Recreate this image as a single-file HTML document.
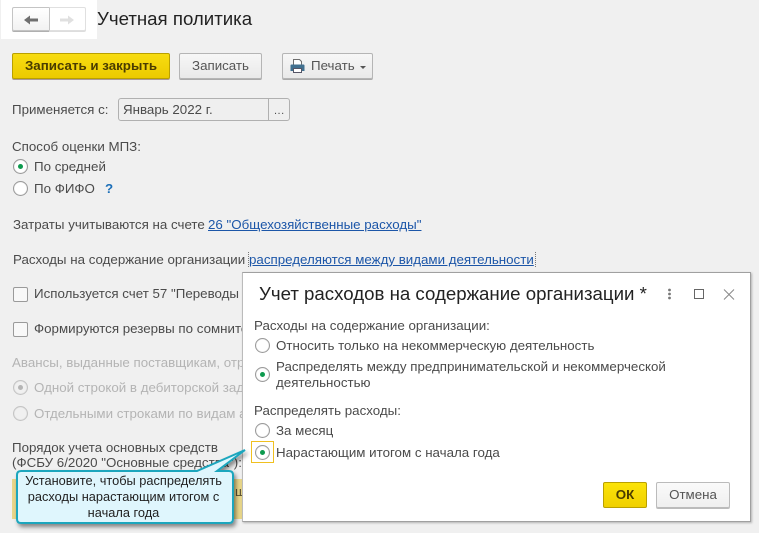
<!DOCTYPE html>
<html><head><meta charset="utf-8">
<style>
html,body{margin:0;padding:0}
body{width:759px;height:533px;overflow:hidden;background:#f0f0f0;position:relative;font-family:"Liberation Sans",sans-serif;font-size:13.33px;color:#4b4b4b}
.t{position:absolute;white-space:nowrap;line-height:14px}
.b{position:absolute;box-sizing:border-box;text-align:center}
.r{position:absolute;width:15px;height:15px;box-sizing:border-box;border:1px solid #9a9a9a;border-radius:50%;background:#fff;box-shadow:inset 0 0 1px #bbb}
.r.on:after{content:"";position:absolute;left:4px;top:4px;width:5px;height:5px;border-radius:50%;background:#0d9a4e}
.r.d{background:#f0f0f0;border-color:#c4c4c4}
.r.d.on:after{background:#b5b5b5}
.c{position:absolute;width:15px;height:15px;box-sizing:border-box;border:1px solid #9a9a9a;border-radius:2px;background:#f8f8f8}
.g{color:#b4b4b4}
a{color:#1c56a8;text-decoration:underline}
</style></head><body>
<div style="position:absolute;left:1px;top:0;width:96px;height:39px;background:#fff"></div>
<div class="b" style="left:12px;top:7px;width:38px;height:24px;background:linear-gradient(#fff,#f2f2f2);border:1px solid #c4c4c4;border-radius:2px 0 0 2px;box-shadow:0 1px 0 #b0b0b0"></div>
<div class="b" style="left:49px;top:7px;width:37px;height:24px;background:#fff;border:1px solid #e0e0e0;border-left:1px solid #c4c4c4;border-radius:0 2px 2px 0;box-shadow:0 1px 0 #ddd"></div>
<svg style="position:absolute;left:24px;top:14px" width="14" height="12"><path d="M0 6L6 1.5V4.5H14V7.5H6V10.500Z" fill="#6f6f6f"/></svg>
<svg style="position:absolute;left:60px;top:14px" width="14" height="12"><path d="M14 6L8 1.500V4.500H0V7.500H8V10.500Z" fill="#e0e0e0"/></svg>
<div class="t" style="left:97px;top:9px;font-size:18.67px;line-height:20px;color:#222">Учетная политика</div>

<div class="b" style="left:12px;top:53px;width:158px;height:26px;background:linear-gradient(#f7dc11,#ecca00);border:1px solid #b9a000;border-radius:2px;box-shadow:0 1px 0 #a99">
<span style="line-height:23px;font-weight:bold;color:#4a3c00">Записать и закрыть</span></div>
<div class="b" style="left:179px;top:53px;width:83px;height:26px;background:linear-gradient(#f7f7f7,#e9e9e9);border:1px solid #b5b5b5;border-radius:2px;box-shadow:0 1px 0 #aaa;line-height:23px;color:#555">Записать</div>
<div class="b" style="left:282px;top:53px;width:91px;height:26px;background:linear-gradient(#f7f7f7,#e9e9e9);border:1px solid #b5b5b5;border-radius:2px;box-shadow:0 1px 0 #aaa"></div>
<svg style="position:absolute;left:290px;top:59px" width="15" height="15"><path d="M3.5 5.5V.5H9.5L11.5 2.5V5.5" fill="#fff" stroke="#6d6d6d"/><path d="M1.500 5.500H13.500Q14.500 5.500 14.500 6.500V12H0.500V6.500Q.5 5.500 1.500 5.500Z" fill="#41708f"/><rect x="3.500" y="9.500" width="8" height="4" fill="#fff" stroke="#556"/></svg>
<div class="t" style="left:311px;top:59px;color:#555">Печать</div>
<div style="position:absolute;left:360px;top:66px;border:3px solid transparent;border-top:3px solid #555;border-bottom:0"></div>

<div class="t" style="left:12px;top:103px">Применяется с:</div>
<div class="b" style="left:118px;top:98px;width:172px;height:23px;border:1px solid #b0b0b0;border-radius:3px;background:#efefef"></div>
<div style="position:absolute;left:268px;top:99px;width:1px;height:21px;background:#b0b0b0"></div>
<div class="t" style="left:123px;top:103px">Январь 2022 г.</div>
<div class="t" style="left:274px;top:104px;font-size:11px;letter-spacing:.5px">...</div>

<div class="t" style="left:12px;top:140px">Способ оценки МПЗ:</div>
<div class="r on" style="left:13px;top:159px"></div>
<div class="t" style="left:34px;top:160px">По средней</div>
<div class="r" style="left:13px;top:181px"></div>
<div class="t" style="left:34px;top:182px">По ФИФО</div>
<div class="t" style="left:105px;top:182px;color:#1c6fb8;font-weight:bold">?</div>
<div class="t" style="left:13px;top:218px">Затраты учитываются на счете</div>
<div class="t" style="left:208px;top:218px"><a>26 "Общехозяйственные расходы"</a></div>
<div class="t" style="left:13px;top:253px">Расходы на содержание организации</div>
<div class="t" style="left:249px;top:253px"><a>распределяются между видами деятельности</a></div>
<div style="position:absolute;left:248px;top:252px;width:286px;height:15px;border-left:1px dotted #777;border-right:1px dotted #777"></div>

<div class="c" style="left:13px;top:287px"></div>
<div class="t" style="left:34px;top:287px">Используется счет 57 "Переводы в пути"</div>
<div class="c" style="left:13px;top:322px"></div>
<div class="t" style="left:34px;top:322px">Формируются резервы по сомнительным долгам</div>
<div class="t g" style="left:12px;top:356px">Авансы, выданные поставщикам, отражаются</div>
<div class="r d on" style="left:13px;top:380px"></div>
<div class="t g" style="left:34px;top:381px">Одной строкой в дебиторской задолженности</div>
<div class="r d" style="left:13px;top:406px"></div>
<div class="t g" style="left:34px;top:407px">Отдельными строками по видам активов</div>
<div class="t" style="left:12px;top:441px">Порядок учета основных средств</div>
<div class="t" style="left:12px;top:456px">(ФСБУ 6/2020 "Основные средства"):</div>
<div style="position:absolute;left:12px;top:479px;width:230px;height:40px;background:#e8d68a"></div>
<div class="t" style="left:235px;top:485px;color:#5a5030">ш</div>

<div style="position:absolute;left:242px;top:272px;width:507px;height:248px;background:#fff;border:1px solid #a0a0a0;border-left:1px solid #bbb;box-shadow:1px 1px 2px rgba(0,0,0,.25)"></div>
<div class="t" style="left:259px;top:283px;font-size:18.67px;line-height:21px;color:#222">Учет расходов на содержание организации *</div>
<svg style="position:absolute;left:666px;top:288px" width="8" height="12"><circle cx="3.500" cy="2" r="1.400" fill="#777"/><circle cx="3.500" cy="6" r="1.400" fill="#777"/><circle cx="3.500" cy="10" r="1.400" fill="#777"/></svg>
<div style="position:absolute;left:694px;top:289px;width:8px;height:8px;border:1px solid #666"></div>
<svg style="position:absolute;left:723px;top:289px" width="12" height="11"><path d="M1 .5L11 10.500M11 .5L1 10.500" stroke="#888" fill="none"/></svg>
<div class="t" style="left:254px;top:319px">Расходы на содержание организации:</div>
<div class="r" style="left:255px;top:338px"></div>
<div class="t" style="left:276px;top:339px">Относить только на некоммерческую деятельность</div>
<div class="r on" style="left:255px;top:367px"></div>
<div class="t" style="left:276px;top:360px">Распределять между предпринимательской и некоммерческой</div>
<div class="t" style="left:276px;top:376px">деятельностью</div>
<div class="t" style="left:254px;top:404px">Распределять расходы:</div>
<div class="r" style="left:255px;top:423px"></div>
<div class="t" style="left:276px;top:424px">За месяц</div>
<div style="position:absolute;left:251px;top:441px;width:23px;height:22px;box-sizing:border-box;border:1px solid #f0c020"></div>
<div class="r on" style="left:255px;top:445px"></div>
<div class="t" style="left:276px;top:446px">Нарастающим итогом с начала года</div>
<div class="b" style="left:603px;top:482px;width:44px;height:26px;background:linear-gradient(#fbe308,#f0d000);border:1px solid #b9a000;border-radius:2px;line-height:24px;font-weight:bold;color:#4a3c00">ОК</div>
<div class="b" style="left:656px;top:482px;width:74px;height:26px;background:linear-gradient(#fafafa,#efefef);border:1px solid #bbb;border-radius:2px;box-shadow:0 1px 0 #bbb;line-height:24px;color:#555">Отмена</div>

<svg style="position:absolute;left:10px;top:440px" width="245" height="93">
<defs><filter id="s" x="-10%" y="-10%" width="125%" height="130%"><feDropShadow dx="2" dy="3" stdDeviation="2" flood-color="#000" flood-opacity=".45"/></filter></defs>
<path d="M11 31H187L235 10L207 31H219Q223 31 223 35V79Q223 83 219 83H11Q7 83 7 79V35Q7 31 11 31Z" fill="#dff6fd" stroke="#1da6bd" stroke-width="2" filter="url(#s)"/>
</svg>
<div class="t" style="left:13px;width:221px;text-align:center;top:474px;color:#222;font-size:12.8px">Установите, чтобы распределять</div>
<div class="t" style="left:13px;width:221px;text-align:center;top:490px;color:#222;font-size:12.8px">расходы нарастающим итогом с</div>
<div class="t" style="left:13px;width:221px;text-align:center;top:506px;color:#222;font-size:12.8px">начала года</div>
</body></html>
